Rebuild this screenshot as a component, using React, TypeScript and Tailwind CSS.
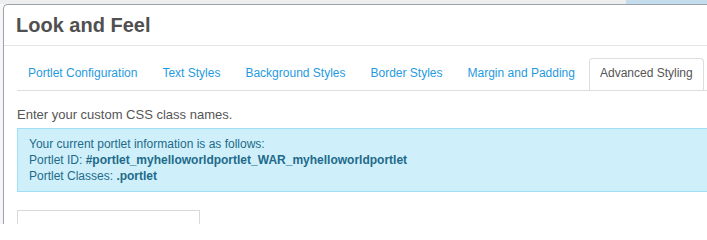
import React from "react";

const tabs = [
  "Portlet Configuration",
  "Text Styles",
  "Background Styles",
  "Border Styles",
  "Margin and Padding",
  "Advanced Styling",
];

export default function App() {
  const active = "Advanced Styling";

  return (
    <div
      className="w-full h-[224px] overflow-hidden bg-[#f6f6f6]"
      style={{ fontFamily: '"Liberation Sans", Arial, sans-serif' }}
    >
      {/* page behind the dialog */}
      <div className="flex h-[4px]">
        <div className="w-[626px] bg-[#eeeeee]" />
        <div className="flex-1 bg-[#c5dcec]" />
      </div>

      {/* Look and Feel dialog */}
      <div className="ml-[3px] w-[760px] bg-white border-l border-t border-[#9aa3aa] rounded-tl-[5px]">
        <div className="h-[41px] flex items-center pl-[12px] border-b border-[#e5e5e5]">
          <h1 className="text-[20px] font-bold text-[#505050] leading-none">Look and Feel</h1>
        </div>

        <div className="px-[13px]">
          {/* tabs */}
          <ul className="mt-[12px] flex border-b border-[#dddddd]">
            {tabs.map((t) => (
              <li
                key={t}
                className={
                  t === active
                    ? "mr-[3px] px-[10px] pt-[4px] pb-[7px] border-t border-l border-r border-[#dddddd] rounded-t-[4px] text-[12px] leading-[20px] text-[#555555] bg-white"
                    : "mr-[3px] px-[10px] pt-[4px] pb-[7px] border-t border-l border-r border-transparent text-[12px] leading-[20px] text-[#1f9ae0] cursor-pointer"
                }
              >
                {t}
              </li>
            ))}
          </ul>

          <p className="mt-[14px] text-[13px] leading-[20px] text-[#555555]">
            Enter your custom CSS class names.
          </p>

          <div className="mt-[3px] border border-[#9fe0f5] bg-[#cff0fb] py-[7px] pl-[11px] text-[12px] leading-[16px] text-[#226a89]">
            <div>Your current portlet information is as follows:</div>
            <div>
              Portlet ID: <strong className="font-bold">#portlet_myhelloworldportlet_WAR_myhelloworldportlet</strong>
            </div>
            <div>
              Portlet Classes: <strong className="font-bold">.portlet</strong>
            </div>
          </div>

          <input
            type="text"
            className="mt-[18px] block w-[183px] h-[30px] border border-[#d9d9d9] bg-white outline-none"
          />
        </div>
      </div>
    </div>
  );
}
